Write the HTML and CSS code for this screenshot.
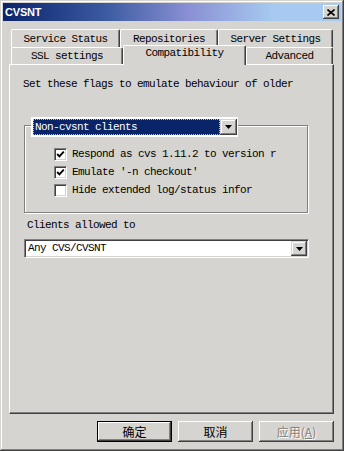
FILE: index.html
```html
<!DOCTYPE html>
<html lang="en">

<head>
    <title>CVSNT</title>
    <link rel="stylesheet" href="styles.css">
</head>

<body>
    <div class="window">
        <div class="titlebar">
            <span class="title">CVSNT</span>
            <span class="close">
                <svg width="8" height="7" viewBox="0 0 8 7"><path d="M0.5 0.5 L7.5 6.5 M7.5 0.5 L0.5 6.5" stroke="#000" stroke-width="1.6" fill="none"/></svg>
            </span>
        </div>
        <div class="body">
            <div class="tab-row row-back">
                <div class="tab t-status">Service Status</div>
                <div class="tab t-repos">Repositories</div>
                <div class="tab t-server">Server Settings</div>
            </div>
            <div class="tab-row row-front">
                <div class="tab t-ssl">SSL settings</div>
                <div class="tab t-compat active">Compatibility</div>
                <div class="tab t-adv">Advanced</div>
            </div>
            <div class="panel">
                <p class="intro">Set these flags to emulate behaviour of older</p>
                <div class="group">
                    <div class="combo combo-legend">
                        <span class="combo-text selected">Non-cvsnt clients</span>
                        <span class="drop"><svg width="7" height="4" viewBox="0 0 7 4"><polygon points="0,0 7,0 3.5,4" fill="#000"/></svg></span>
                    </div>
                    <div class="checks">
                        <div class="check">
                            <span class="box"><svg width="9" height="9" viewBox="0 0 9 9"><polyline points="1.2,4 3.4,6.4 7.8,1.6" stroke="#000" stroke-width="1.9" fill="none"/></svg></span>
                            <span>Respond as cvs 1.11.2 to version r</span>
                        </div>
                        <div class="check">
                            <span class="box"><svg width="9" height="9" viewBox="0 0 9 9"><polyline points="1.2,4 3.4,6.4 7.8,1.6" stroke="#000" stroke-width="1.9" fill="none"/></svg></span>
                            <span>Emulate '-n checkout'</span>
                        </div>
                        <div class="check">
                            <span class="box"></span>
                            <span>Hide extended log/status infor</span>
                        </div>
                    </div>
                </div>
                <p class="field-label">Clients allowed to</p>
                <div class="combo combo-wide">
                    <span class="combo-text">Any CVS/CVSNT</span>
                    <span class="drop"><svg width="7" height="4" viewBox="0 0 7 4"><polygon points="0,0 7,0 3.5,4" fill="#000"/></svg></span>
                </div>
            </div>
            <div class="buttons">
                <button class="btn default">确定</button>
                <button class="btn">取消</button>
                <button class="btn disabled">应用(<u>A</u>)</button>
            </div>
        </div>
    </div>
</body>

</html>
```

FILE: styles.css
```css
* {
    box-sizing: border-box;
}

body {
    margin: 0;
    background-color: #d5d4d1;
}

.window {
    width: 344px;
    height: 451px;
    padding: 3px;
    background-color: #d5d4d1;
    box-shadow: inset -1px -1px #404040, inset 1px 1px #d5d4d1, inset -2px -2px #808080, inset 2px 2px #fff;
    font-family: "Liberation Mono", monospace;
    font-size: 11px;
    letter-spacing: -0.6px;
    color: #000;
}

.titlebar {
    height: 18px;
    display: flex;
    align-items: center;
    justify-content: space-between;
    padding: 0 2px;
    background: linear-gradient(90deg, #0a246a 0%, #3a5aa0 30%, #8a90d4 55%, #a6caf0 80%, #a6caf0 100%);
}

.title {
    font-family: "Liberation Sans", sans-serif;
    font-weight: bold;
    font-size: 11px;
    letter-spacing: -0.2px;
    color: #fff;
}

.close {
    width: 16px;
    height: 14px;
    display: flex;
    align-items: center;
    justify-content: center;
    background-color: #d5d4d1;
    box-shadow: inset -1px -1px #404040, inset 1px 1px #fff, inset -2px -2px #808080;
}

.body {
    padding: 8px 7px 0 6px;
}

.tab-row {
    display: flex;
    margin-left: 2px;
}

.row-back {
    height: 18px;
}

.row-front {
    height: 17px;
}

.tab {
    height: 100%;
    text-align: center;
    line-height: 14px;
    white-space: nowrap;
    border-top: 1px solid #fff;
    border-left: 1px solid #fff;
    border-right: 1px solid #404040;
    border-radius: 2px 2px 0 0;
    box-shadow: inset -1px 0 #808080;
}

.row-back .tab {
    padding-top: 2px;
}

.row-front .tab {
    padding-top: 1px;
}

.t-status { width: 109px; }
.t-repos { width: 98px; }
.t-server { width: 115px; }
.t-ssl { width: 112px; }
.t-compat { width: 123px; }
.t-adv { width: 87px; }

.row-front .tab.active {
    position: relative;
    height: 20px;
    margin-top: -2px;
    padding-top: 0;
    background-color: #d5d4d1;
}

.panel {
    width: 325px;
    height: 350px;
    border-top: 1px solid #fff;
    border-left: 1px solid #fff;
    border-right: 1px solid #404040;
    border-bottom: 1px solid #404040;
    box-shadow: inset -1px -1px #808080;
}

.intro {
    margin: 13px 0 0 13px;
    line-height: 12px;
}

.group {
    width: 284px;
    height: 88px;
    margin: 35px 0 0 14px;
    border: 1px solid #808080;
    box-shadow: inset 1px 1px #fff, 1px 1px #fff;
}

.combo {
    display: flex;
    align-items: stretch;
    background-color: #fff;
}

.combo-legend {
    width: 207px;
    height: 20px;
    margin: -9px 0 0 6px;
    padding: 2px 1px 2px 2px;
}

.combo-text {
    flex: 1;
    line-height: 16px;
    padding-left: 2px;
    white-space: nowrap;
}

.selected {
    background-color: #0a246a;
    color: #fff;
    outline: 1px dotted #c8c080;
    outline-offset: -1px;
}

.drop {
    width: 17px;
    display: flex;
    align-items: center;
    justify-content: center;
    background-color: #d5d4d1;
    box-shadow: inset -1px -1px #404040, inset 1px 1px #d5d4d1, inset -2px -2px #808080, inset 2px 2px #fff;
}

.checks {
    margin: 11px 0 0 29px;
}

.check {
    height: 18px;
    display: flex;
    align-items: flex-start;
    gap: 5px;
    line-height: 13px;
}

.box {
    width: 13px;
    height: 13px;
    display: flex;
    align-items: center;
    justify-content: center;
    background-color: #fff;
    border-top: 1px solid #808080;
    border-left: 1px solid #808080;
    border-right: 1px solid #fff;
    border-bottom: 1px solid #fff;
    box-shadow: inset 1px 1px #404040, inset -1px -1px #d5d4d1;
}

.field-label {
    margin: 6px 0 0 17px;
    line-height: 12px;
}

.combo-wide {
    width: 285px;
    height: 19px;
    margin: 8px 0 0 14px;
    padding: 2px;
    border-top: 1px solid #808080;
    border-left: 1px solid #808080;
    border-right: 1px solid #fff;
    border-bottom: 1px solid #fff;
    box-shadow: inset 1px 1px #404040, inset -1px -1px #d5d4d1;
}

.combo-wide .combo-text {
    line-height: 13px;
    padding-left: 1px;
}

.combo-wide .drop {
    width: 16px;
    margin: -1px -1px -1px 0;
}

.buttons {
    display: flex;
    justify-content: flex-end;
    gap: 6px;
    margin-top: 7px;
}

.btn {
    width: 75px;
    height: 21px;
    padding: 0;
    border: none;
    background-color: #d5d4d1;
    font-family: "Noto Sans CJK SC", sans-serif;
    font-size: 12px;
    line-height: 21px;
    color: #000;
    box-shadow: inset -1px -1px #404040, inset 1px 1px #fff, inset -2px -2px #808080;
}

.btn.default {
    box-shadow: inset 0 0 0 1px #000, inset -2px -2px #404040, inset 2px 2px #fff, inset -3px -3px #808080;
}

.btn.disabled {
    color: #808080;
    text-shadow: 1px 1px #fff;
}
```
